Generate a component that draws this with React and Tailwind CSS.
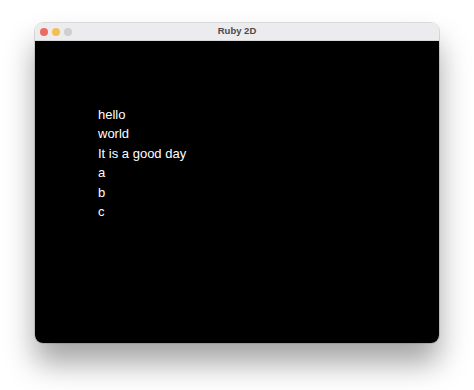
export default function App() {
  return (
    <div className="w-[474px] h-[390px] bg-white overflow-hidden pt-[23px] pl-[35px]">
      <div className="w-[404px] h-[320px] rounded-[8px] overflow-hidden flex flex-col shadow-[0_20px_30px_rgba(0,0,0,0.36),0_0_0_1px_rgba(0,0,0,0.12)]">
        <div className="h-[18px] bg-[#ecebed] relative flex items-center pl-[5px] gap-[4px] border-b border-[#d8d8d8]">
          <div className="w-[8px] h-[8px] rounded-full bg-[#ec6a5e]" />
          <div className="w-[8px] h-[8px] rounded-full bg-[#f4bf4f]" />
          <div className="w-[8px] h-[8px] rounded-full bg-[#cfcfcf]" />
          <div className="absolute inset-0 flex items-center justify-center text-[9.5px] font-bold text-[#4a4a4a] font-['Liberation_Sans',sans-serif]">
            Ruby 2D
          </div>
        </div>
        <div className="flex-1 bg-black pt-[64px] pl-[63px] text-white text-[13px] leading-[19.4px] font-['Liberation_Sans',sans-serif]">
          <div>hello</div>
          <div>world</div>
          <div>It is a good day</div>
          <div>a</div>
          <div>b</div>
          <div>c</div>
        </div>
      </div>
    </div>
  );
}
